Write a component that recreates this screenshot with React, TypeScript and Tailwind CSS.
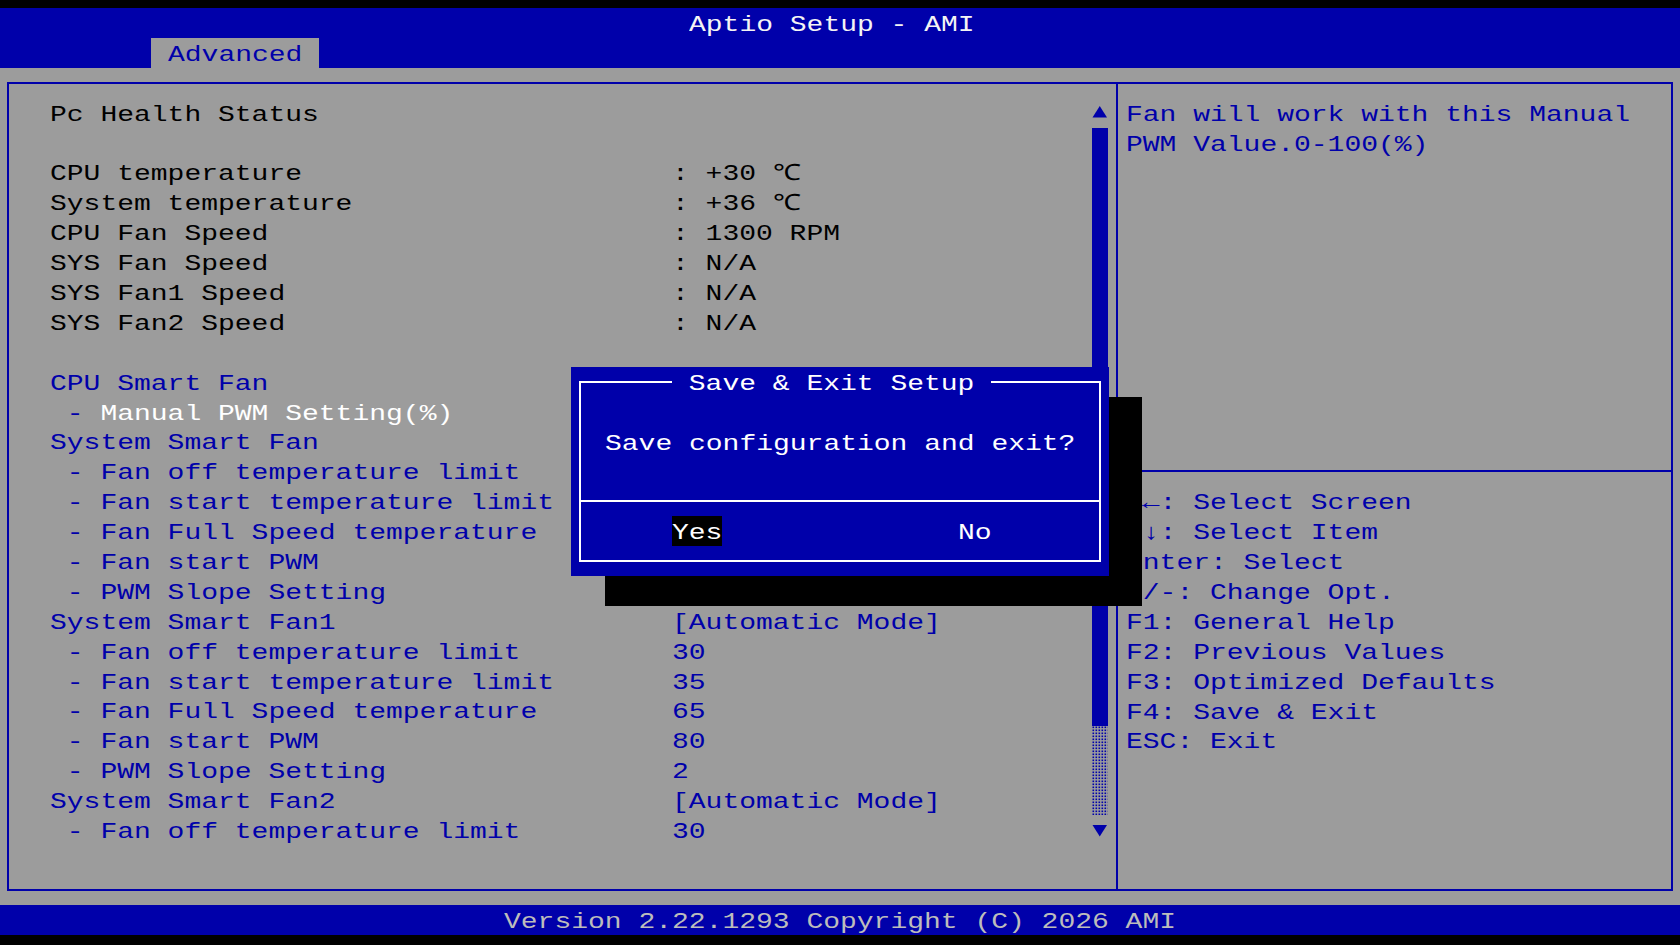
import React from 'react';

// text-mode cell: 16.8 x 29.9 px, Liberation Mono 22.3px stretched to fill the cell
const T = ({ children, className }: { children: React.ReactNode; className?: string }) => (
    <span className={`inline-block origin-left scale-x-[1.2556] whitespace-pre leading-[34px] ${className ?? ''}`}>
        {children}
    </span>
);

type Row = {
    label?: React.ReactNode;
    value?: string;
    color?: string;
};

const blue = 'text-[#0000aa]';
const black = 'text-black';

const rows: Row[] = [
    { label: 'Pc Health Status', color: black },
    {},
    { label: 'CPU temperature', value: ': +30 ℃', color: black },
    { label: 'System temperature', value: ': +36 ℃', color: black },
    { label: 'CPU Fan Speed', value: ': 1300 RPM', color: black },
    { label: 'SYS Fan Speed', value: ': N/A', color: black },
    { label: 'SYS Fan1 Speed', value: ': N/A', color: black },
    { label: 'SYS Fan2 Speed', value: ': N/A', color: black },
    {},
    { label: 'CPU Smart Fan', color: blue },
    {
        label: (
            <>
                <span className="text-[#0000aa]"> - </span>
                <span className="text-white">Manual PWM Setting(%)</span>
            </>
        ),
    },
    { label: 'System Smart Fan', color: blue },
    { label: ' - Fan off temperature limit', color: blue },
    { label: ' - Fan start temperature limit', color: blue },
    { label: ' - Fan Full Speed temperature', color: blue },
    { label: ' - Fan start PWM', color: blue },
    { label: ' - PWM Slope Setting', color: blue },
    { label: 'System Smart Fan1', value: '[Automatic Mode]', color: blue },
    { label: ' - Fan off temperature limit', value: '30', color: blue },
    { label: ' - Fan start temperature limit', value: '35', color: blue },
    { label: ' - Fan Full Speed temperature', value: '65', color: blue },
    { label: ' - Fan start PWM', value: '80', color: blue },
    { label: ' - PWM Slope Setting', value: '2', color: blue },
    { label: 'System Smart Fan2', value: '[Automatic Mode]', color: blue },
    { label: ' - Fan off temperature limit', value: '30', color: blue },
];

const keys = [
    '→←: Select Screen',
    '↑↓: Select Item',
    'Enter: Select',
    '+/-: Change Opt.',
    'F1: General Help',
    'F2: Previous Values',
    'F3: Optimized Defaults',
    'F4: Save & Exit',
    'ESC: Exit',
];

const App = () => {
    return (
        <div className="relative h-[945px] w-[1680px] overflow-hidden bg-black pt-[8px] font-['Liberation_Mono','DejaVu_Sans_Mono',monospace] text-[22.3px]">
            {/* header */}
            <div className="flex h-[59.8px] flex-col bg-[#0000aa]">
                <div className="flex h-[29.9px] pl-[688.8px] text-[#f4f4f4]">
                    <T>Aptio Setup - AMI</T>
                </div>
                <div className="flex h-[29.9px] pl-[151.2px]">
                    <div className="flex w-[168px] bg-[#9c9c9c] pl-[16.8px]">
                        <T className="text-[#0000aa]">Advanced</T>
                    </div>
                </div>
            </div>

            {/* main */}
            <div className="h-[837.2px] bg-[#9c9c9c] px-[7.4px] py-[13.95px]">
                <div className="flex h-full border-2 border-[#0000aa]">
                    <div className="flex w-[1106.8px]">
                        <div className="flex-1 pl-[41px] pt-[13.95px]">
                            {rows.map((r, i) => (
                                <div key={i} className="flex h-[29.9px]">
                                    <div className="flex w-[621.6px]">
                                        {r.label && <T className={r.color}>{r.label}</T>}
                                    </div>
                                    {r.value && <T className={r.color}>{r.value}</T>}
                                </div>
                            ))}
                        </div>
                        <div className="mr-[7.4px] flex w-[16.8px] flex-col pt-[13.95px]">
                            <svg width="16.8" height="29.9" viewBox="0 0 16.8 29.9">
                                <polygon points="7.75,8 0.5,19.5 15,19.5" fill="#0000aa" />
                            </svg>
                            <div className="h-[598px] w-[15.5px] bg-[#0000aa]" />
                            <svg width="15.5" height="89.7">
                                <defs>
                                    <pattern id="dots" width="3" height="3" patternUnits="userSpaceOnUse">
                                        <rect x="0.5" y="0.5" width="1.6" height="1.6" fill="#0000aa" />
                                    </pattern>
                                </defs>
                                <rect width="15.5" height="89.7" fill="url(#dots)" />
                            </svg>
                            <svg width="16.8" height="29.9" viewBox="0 0 16.8 29.9">
                                <polygon points="0.5,10 15,10 7.75,21.5" fill="#0000aa" />
                            </svg>
                        </div>
                    </div>
                    <div className="w-[2px] bg-[#0000aa]" />
                    <div className="flex flex-1 flex-col">
                        <div className="h-[386.7px] pl-[7.4px] pt-[13.95px]">
                            <div className="flex h-[29.9px]">
                                <T className="text-[#0000aa]">Fan will work with this Manual</T>
                            </div>
                            <div className="flex h-[29.9px]">
                                <T className="text-[#0000aa]">PWM Value.0-100(%)</T>
                            </div>
                        </div>
                        <div className="h-[2px] bg-[#0000aa]" />
                        <div className="pl-[7.4px] pt-[13.95px]">
                            {keys.map((k) => (
                                <div key={k} className="flex h-[29.9px]">
                                    <T className="text-[#0000aa]">{k}</T>
                                </div>
                            ))}
                        </div>
                    </div>
                </div>
            </div>

            {/* footer */}
            <div className="flex h-[29.9px] bg-[#0000aa] pl-[504px] text-[#bcbcbc]">
                <T>Version 2.22.1293 Copyright (C) 2026 AMI</T>
            </div>

            {/* save & exit dialog */}
            <div className="absolute left-[604.8px] top-[396.7px] h-[209.3px] w-[537.6px] bg-black" />
            <div className="absolute left-[571.2px] top-[366.8px] h-[209.3px] w-[537.6px] bg-[#0000aa] px-[7.4px] pt-[13.95px] text-white">
                <div className="flex h-[181.4px] flex-col border-2 border-white">
                    <div className="-mt-[15.95px] ml-[91.4px] flex h-[29.9px] w-[319.2px] bg-[#0000aa]">
                        <T> Save &amp; Exit Setup </T>
                    </div>
                    <div className="h-[29.9px]" />
                    <div className="ml-[24.2px] flex h-[29.9px]">
                        <T>Save configuration and exit?</T>
                    </div>
                    <div className="h-[43.85px]" />
                    <div className="h-[2px] bg-white" />
                    <div className="mt-[13.95px] flex h-[29.9px]">
                        <div className="ml-[91.4px] flex w-[50.4px] bg-black">
                            <T>Yes</T>
                        </div>
                        <div className="ml-[235.2px] flex">
                            <T>No</T>
                        </div>
                    </div>
                </div>
            </div>
        </div>
    );
};

export default App;
